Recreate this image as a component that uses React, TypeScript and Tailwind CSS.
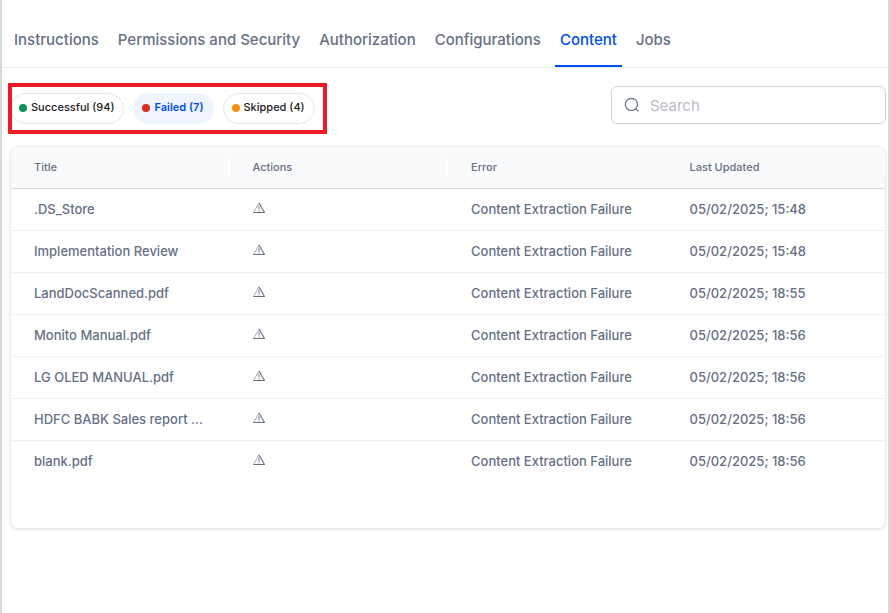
const tabs = ["Instructions", "Permissions and Security", "Authorization", "Configurations", "Content", "Jobs"];

const filters = [
  { label: "Successful (94)", dot: "bg-[#079455]", active: false },
  { label: "Failed (7)", dot: "bg-[#d92d20]", active: true },
  { label: "Skipped (4)", dot: "bg-[#f79009]", active: false },
];

const columns = [
  { name: "Title", handle: true },
  { name: "Actions", handle: true },
  { name: "Error", handle: false },
  { name: "Last Updated", handle: true },
];

const rows = [
  { title: ".DS_Store", updated: "05/02/2025; 15:48" },
  { title: "Implementation Review", updated: "05/02/2025; 15:48" },
  { title: "LandDocScanned.pdf", updated: "05/02/2025; 18:55" },
  { title: "Monito Manual.pdf", updated: "05/02/2025; 18:56" },
  { title: "LG OLED MANUAL.pdf", updated: "05/02/2025; 18:56" },
  { title: "HDFC BABK Sales report ...", updated: "05/02/2025; 18:56" },
  { title: "blank.pdf", updated: "05/02/2025; 18:56" },
];

function WarningIcon() {
  return (
    <svg width="12" height="12" viewBox="0 0 12 12" fill="none" stroke="#667085" aria-hidden="true">
      <path d="M6 0.9 L0.6 10.5" strokeWidth="0.6" />
      <path d="M6 0.9 L11.5 10.5" strokeWidth="1.1" />
      <path d="M0.3 10.5 H11.8" strokeWidth="1" />
      <path d="M6 3.6 V7.6 M6 8.4 V9.6" strokeWidth="0.9" />
    </svg>
  );
}

function SearchIcon() {
  return (
    <svg width="16" height="16" viewBox="0 0 16 16" fill="none" stroke="#667085" strokeWidth="1.2" strokeLinecap="round" aria-hidden="true">
      <circle cx="7.4" cy="7.4" r="6.1" />
      <path d="M11.8 11.8 L14.2 14.2" />
    </svg>
  );
}

export default function App() {
  return (
    <div className="min-h-screen border-x-2 border-[#d9d9d9] bg-white font-['Inter',sans-serif] font-medium text-[#667085]">
      <nav className="flex h-[68px] items-stretch gap-[9px] border-b border-[#eaecf0] pl-[7px] text-[15px]">
        {tabs.map((tab) => (
          <button
            key={tab}
            type="button"
            className={
              tab === "Content"
                ? "border-b-2 border-[#004eeb] px-[5px] pt-4 text-[#004eeb]"
                : "border-b-2 border-transparent px-[5px] pt-4"
            }
          >
            {tab}
          </button>
        ))}
      </nav>

      <main className="pr-[2px] pl-2">
        <div className="flex items-center justify-between pt-[18px] pb-[22px]">
          <div className="relative mt-[6px] flex gap-[9px] text-[11px]">
            {filters.map((filter) => (
              <button
                key={filter.label}
                type="button"
                className={
                  filter.active
                    ? "flex h-[31px] items-center gap-1 rounded-full border border-[#eff4ff] bg-[#eff4ff] pr-[9px] pl-2 pb-[2px] font-semibold text-[#004eeb]"
                    : "flex h-[31px] items-center gap-1 rounded-full border border-[#e4e7ec] pr-[9px] pl-2 pb-[2px] text-[#202124]"
                }
              >
                <span className={`mt-[2px] size-2 rounded-full ${filter.dot}`} />
                {filter.label}
              </button>
            ))}
            <div className="pointer-events-none absolute -top-[10px] -right-3 -bottom-[10px] -left-[2px] border-4 border-[#ed1c24]" />
          </div>

          <label className="flex h-[38px] w-[275px] items-center gap-[10px] rounded-md border border-[#d0d5dd] px-3 shadow-xs">
            <SearchIcon />
            <input
              type="text"
              aria-label="Search"
              placeholder="Search"
              className="min-w-0 flex-1 pt-[2px] text-[15px] font-normal outline-none placeholder:text-[#b9bdc5]"
            />
          </label>
        </div>

        <section className="overflow-hidden rounded-lg border border-[#eaecf0] pb-[45px] shadow-sm">
          <table className="w-full table-fixed border-separate border-spacing-0 text-left text-[13px]">
            <thead className="bg-[#f9fafb] text-[11px]">
              <tr>
                {columns.map((column) => (
                  <th key={column.name} className="h-[42px] border-b border-[#d5d8dc] p-0 font-medium">
                    <div
                      className={
                        column.handle
                          ? "flex h-[19px] items-center border-r-2 border-white pl-[23px]"
                          : "flex h-[19px] items-center pl-[23px]"
                      }
                    >
                      {column.name}
                    </div>
                  </th>
                ))}
              </tr>
            </thead>
            <tbody>
              {rows.map((row) => (
                <tr key={row.title} className="group">
                  <td className="h-[42px] truncate border-b border-[#eff0f2] py-0 pr-2 pl-[23px] group-last:border-transparent">{row.title}</td>
                  <td className="h-[42px] border-b border-[#eff0f2] py-0 pl-[23px] group-last:border-transparent">
                    <button type="button" aria-label="Show error details" className="block pb-[3px]">
                      <WarningIcon />
                    </button>
                  </td>
                  <td className="h-[42px] border-b border-[#eff0f2] py-0 pl-[23px] group-last:border-transparent">Content Extraction Failure</td>
                  <td className="h-[42px] border-b border-[#eff0f2] py-0 pl-[23px] group-last:border-transparent">{row.updated}</td>
                </tr>
              ))}
            </tbody>
          </table>
        </section>
      </main>
    </div>
  );
}
